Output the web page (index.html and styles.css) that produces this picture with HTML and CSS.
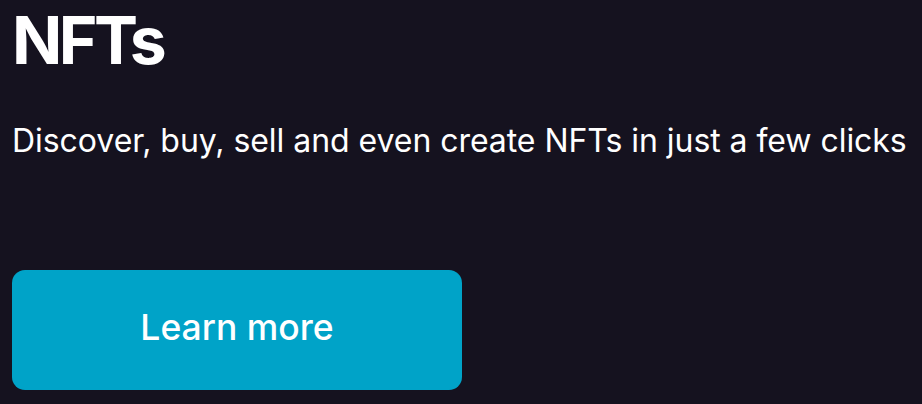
FILE: index.html
```html
<!DOCTYPE html>
<html>
<head>
<meta charset="utf-8">
<link rel="stylesheet" href="styles.css">
</head>
<body>
<section class="card">
  <h1 class="title">NFTs</h1>
  <p class="desc">Discover, buy, sell and even create NFTs in just a few clicks</p>
  <a class="btn" href="#">Learn more</a>
</section>
</body>
</html>
```
FILE: styles.css
```css
html, body {
  margin: 0;
  padding: 0;
  background: #15121f;
}
.card {
  width: 922px;
  height: 404px;
  box-sizing: border-box;
  padding: 0 12px;
  font-family: Inter, "Noto Sans", sans-serif;
  color: #ffffff;
  display: flex;
  flex-direction: column;
  align-items: flex-start;
}
.title {
  margin: 0;
  font-size: 66px;
  font-weight: 700;
  line-height: 80px;
  letter-spacing: -3.5px;
}
.desc {
  margin: 41px 0 0;
  font-size: 32px;
  line-height: 40px;
  font-weight: 400;
  letter-spacing: -0.05px;
}
.btn {
  margin-top: 109px;
  width: 450px;
  height: 120px;
  box-sizing: border-box;
  padding-bottom: 6px;
  border-radius: 13px;
  background: #00a3c8;
  color: #ffffff;
  text-decoration: none;
  font-size: 35.5px;
  font-weight: 500;
  display: flex;
  align-items: center;
  justify-content: center;
}
```
